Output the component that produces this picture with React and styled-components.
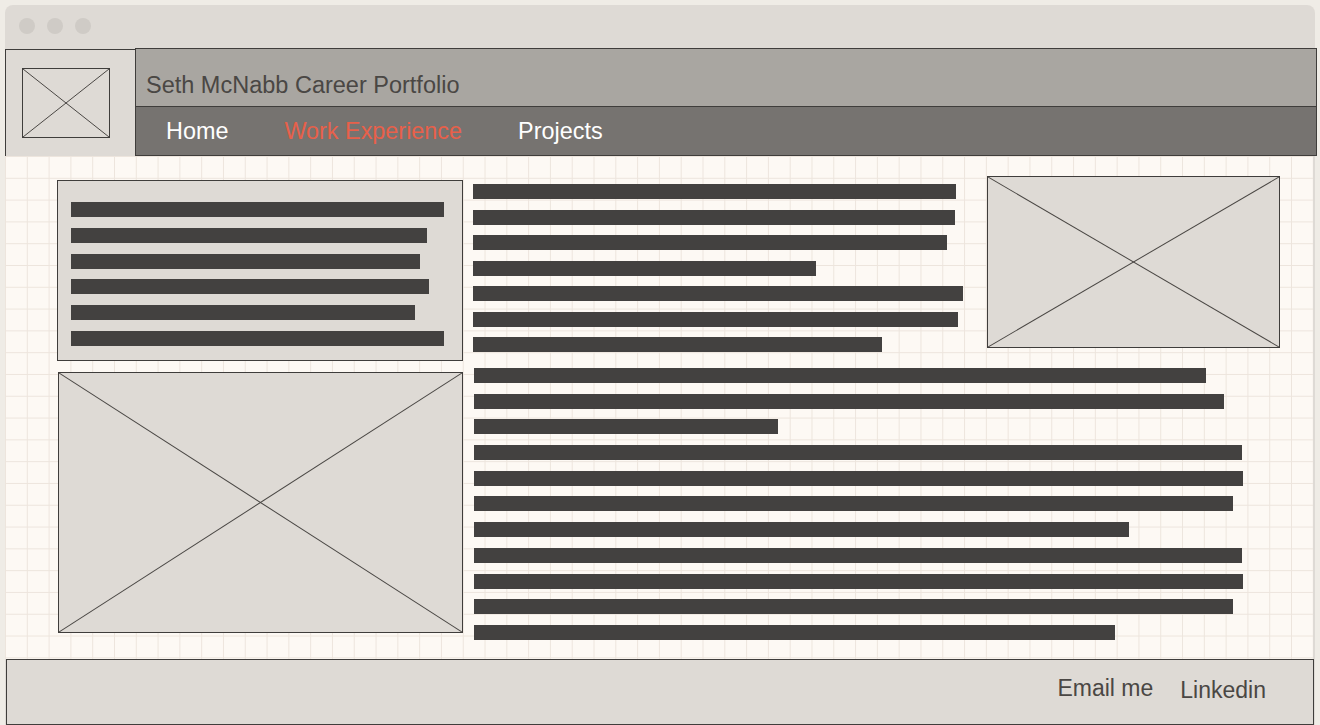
import React from 'react';
import styled, { createGlobalStyle } from 'styled-components';

const cardLines = [373, 356, 349, 358, 344, 373];
const introLines = [483, 482, 474, 343, 490, 485, 409];
const bodyLines = [732, 750, 304, 768, 769, 759, 655, 768, 769, 759, 641];

const Placeholder = ({ className }) => (
  <ImageBox className={className}>
    <svg width="100%" height="100%" viewBox="0 0 100 100" preserveAspectRatio="none">
      <line x1="0" y1="0" x2="100" y2="100" stroke="#4a4744" strokeWidth="1" vectorEffect="non-scaling-stroke" />
      <line x1="100" y1="0" x2="0" y2="100" stroke="#4a4744" strokeWidth="1" vectorEffect="non-scaling-stroke" />
    </svg>
  </ImageBox>
);

const App = () => (
  <>
    <GlobalStyle />
    <Window>
      <TitleBar>
        <Dot />
        <Dot />
        <Dot />
      </TitleBar>
      <Header>
        <LogoCell>
          <Logo />
        </LogoCell>
        <HeaderMain>
          <SiteTitle>Seth McNabb Career Portfolio</SiteTitle>
          <Nav>
            <NavItem>Home</NavItem>
            <NavItem $active>Work Experience</NavItem>
            <NavItem>Projects</NavItem>
          </Nav>
        </HeaderMain>
      </Header>
      <Main>
        <LeftColumn>
          <TextCard>
            {cardLines.map((w, i) => (
              <Bar key={i} $w={w} />
            ))}
          </TextCard>
          <SideImage />
        </LeftColumn>
        <RightArea>
          <TopRow>
            <TextBlock $gap={10.5}>
              {introLines.map((w, i) => (
                <Bar key={i} $w={w} />
              ))}
            </TextBlock>
            <HeroImage />
          </TopRow>
          <TextBlock $gap={10.7} $indent={1}>
            {bodyLines.map((w, i) => (
              <Bar key={i} $w={w} />
            ))}
          </TextBlock>
        </RightArea>
      </Main>
      <Footer>
        <FooterLink>Email me</FooterLink>
        <FooterLink $low>Linkedin</FooterLink>
      </Footer>
    </Window>
  </>
);

const GlobalStyle = createGlobalStyle`
  html, body {
    margin: 0;
    padding: 0;
    background: #efece6;
    font-family: "Liberation Sans", Arial, sans-serif;
  }
  * {
    box-sizing: border-box;
  }
`;

const Window = styled.div`
  margin: 5px 5px 0;
  width: 1310px;
  height: 720px;
  background: #dedad5;
  border-radius: 8px 8px 0 0;
  display: flex;
  flex-direction: column;
`;

const TitleBar = styled.div`
  height: 43px;
  flex-shrink: 0;
  display: flex;
  align-items: center;
  gap: 12px;
  padding: 0 0 2px 14px;
`;

const Dot = styled.span`
  width: 16px;
  height: 16px;
  border-radius: 50%;
  background: #cfcbc6;
`;

const Header = styled.header`
  display: flex;
  width: 1312px;
  height: 108px;
  flex-shrink: 0;
`;

const LogoCell = styled.div`
  width: 130px;
  flex-shrink: 0;
  height: 108px;
  margin-top: 1px;
  border: 1px solid #3f3d3b;
  border-right: none;
  background: #dedad5;
  display: flex;
  align-items: center;
  padding-left: 16px;
`;

const ImageBox = styled.div`
  border: 1px solid #3f3d3b;
  background: #dedad5;
  flex-shrink: 0;

  svg {
    display: block;
  }
`;

const Logo = styled(Placeholder)`
  width: 88px;
  height: 70px;
`;

const HeaderMain = styled.div`
  flex: 1;
  display: flex;
  flex-direction: column;
  border: 1px solid #3f3d3b;
  height: 108px;
`;

const SiteTitle = styled.h1`
  margin: 0;
  height: 58px;
  flex-shrink: 0;
  background: #a9a6a1;
  border-bottom: 1px solid #3f3d3b;
  display: flex;
  align-items: flex-end;
  padding: 0 0 7px 10px;
  font-size: 23.5px;
  font-weight: normal;
  color: #4a4744;
`;

const Nav = styled.nav`
  flex: 1;
  background: #767370;
  display: flex;
  align-items: center;
  gap: 56px;
  padding: 0 0 0 30px;
`;

const NavItem = styled.span`
  font-size: 23.4px;
  color: ${p => (p.$active ? '#e8604a' : '#ffffff')};
`;

const Main = styled.main`
  flex: 1;
  display: flex;
  align-items: flex-start;
  padding: 0 0 0 52px;
  width: 1308px;
  background-color: #fdf9f4;
  background-image:
    linear-gradient(to right, #ede5dd 1px, transparent 1px),
    linear-gradient(to bottom, #ede5dd 1px, transparent 1px);
  background-size: 21.8px 21.8px;
`;

const LeftColumn = styled.div`
  width: 406px;
  margin-top: 24px;
  display: flex;
  flex-direction: column;
  gap: 11px;
`;

const TextCard = styled.div`
  height: 181px;
  background: #dedad5;
  border: 1px solid #3f3d3b;
  padding: 21px 0 0 13px;
  display: flex;
  flex-direction: column;
  gap: 10.8px;
`;

const SideImage = styled(Placeholder)`
  width: 405px;
  height: 261px;
  margin-left: 1px;
`;

const RightArea = styled.div`
  margin-left: 10px;
  padding-top: 20px;
  display: flex;
  flex-direction: column;
  width: 808px;
`;

const TopRow = styled.div`
  display: flex;
  align-items: flex-start;
  height: 192px;
`;

const TextBlock = styled.div`
  display: flex;
  flex-direction: column;
  gap: ${p => p.$gap}px;
  padding-top: ${p => (p.$indent ? 0 : 8)}px;
  margin-left: ${p => p.$indent || 0}px;
`;

const HeroImage = styled(Placeholder)`
  width: 293px;
  height: 172px;
  margin-left: auto;
  margin-right: 1px;
`;

const Bar = styled.div`
  width: ${p => p.$w}px;
  height: 15px;
  background: #434140;
`;

const Footer = styled.footer`
  height: 66px;
  width: 1308px;
  margin-left: 1px;
  flex-shrink: 0;
  border: 1px solid #3f3d3b;
  background: #dedad5;
  display: flex;
  align-items: center;
  justify-content: flex-end;
  gap: 27px;
  padding: 0 47px 8px 0;
`;

const FooterLink = styled.a`
  font-size: 23px;
  color: #4a4744;
  position: relative;
  top: ${p => (p.$low ? 2 : 0)}px;
`;

export default App;
